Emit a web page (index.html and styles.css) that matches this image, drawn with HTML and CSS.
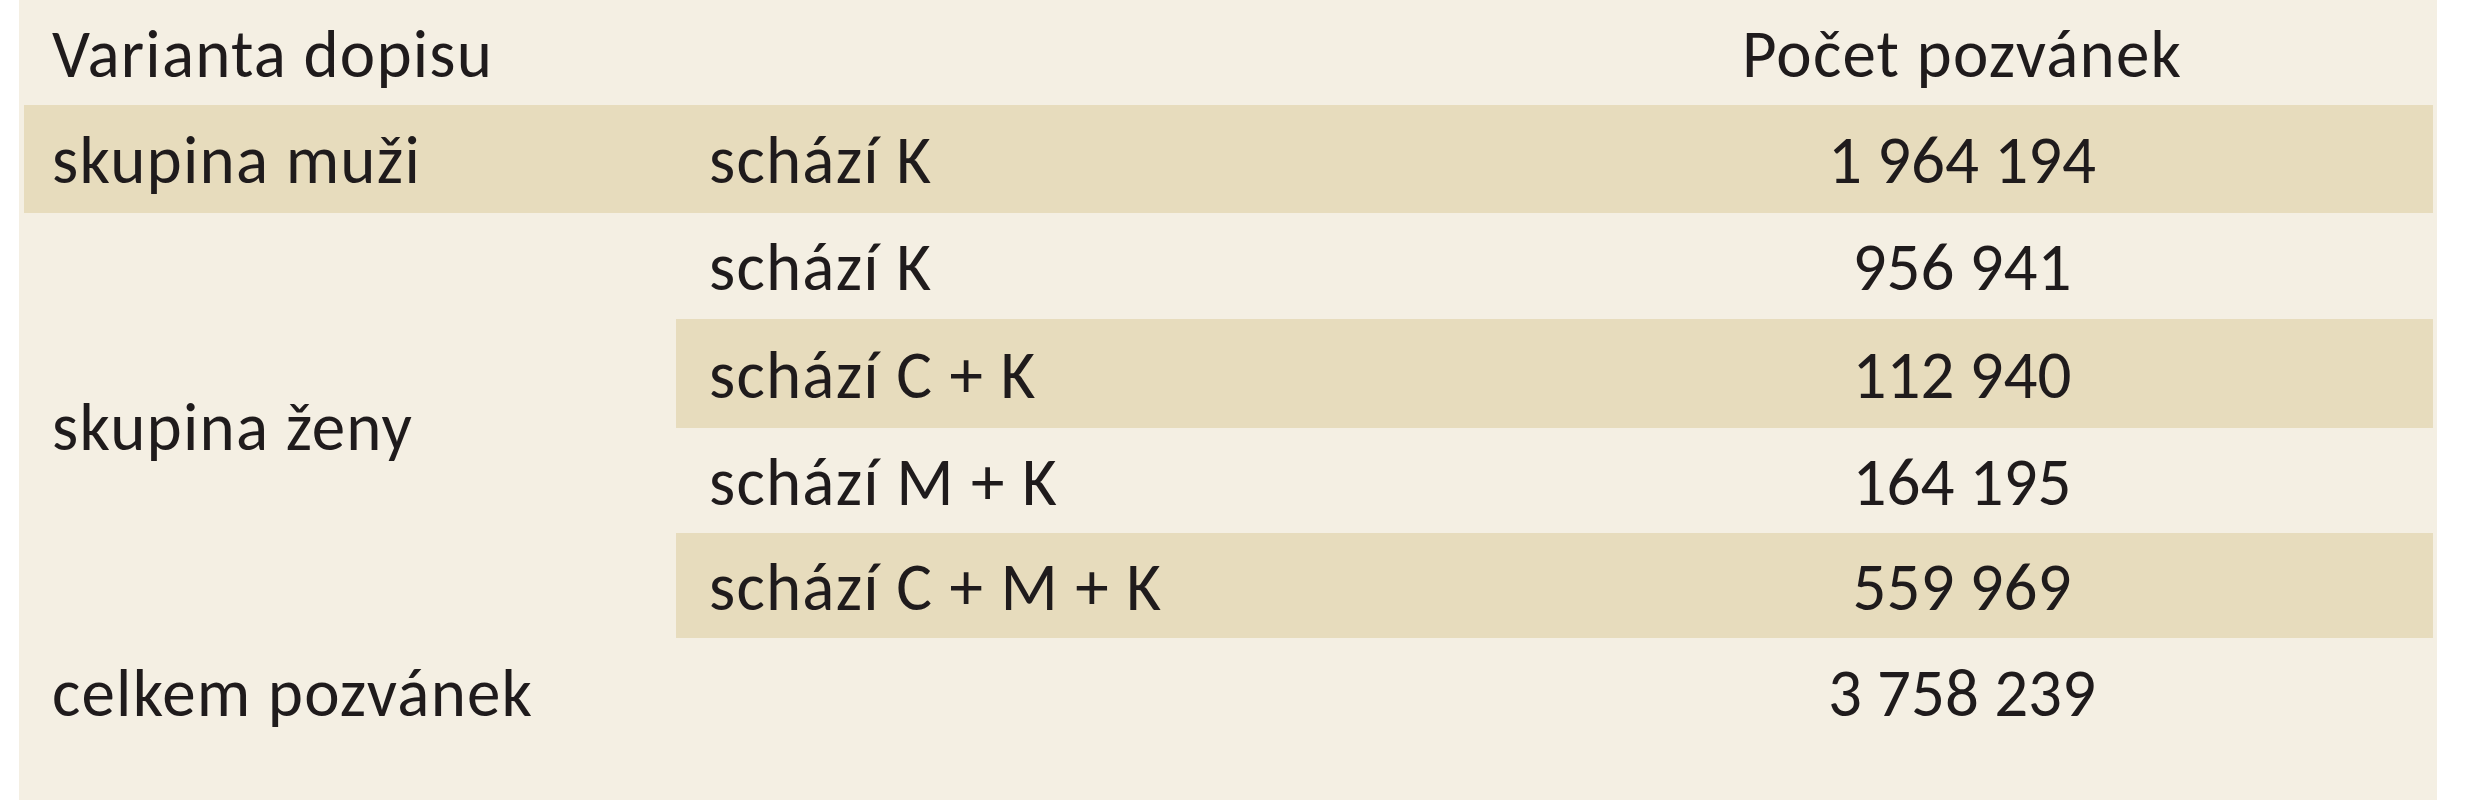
FILE: index.html
```html
<!DOCTYPE html>
<html lang="cs">
<head>
<meta charset="utf-8">
<title>Varianta dopisu</title>
<link rel="stylesheet" href="styles.css">
</head>
<body>
<div class="panel">
  <div class="table">
    <div class="cell c1 head r0">Varianta dopisu</div>
    <div class="cell c2 head r0"></div>
    <div class="cell c3 head r0">Počet pozvánek</div>

    <div class="cell c1 dark r1">skupina muži</div>
    <div class="cell c2 dark r1">schází K</div>
    <div class="cell c3 dark r1">1&#8239;964&#8239;194</div>

    <div class="cell c1 span">skupina ženy</div>
    <div class="cell c2 r2">schází K</div>
    <div class="cell c3 r2">956&#8239;941</div>
    <div class="cell c2 dark r3">schází C + K</div>
    <div class="cell c3 dark r3">112&#8239;940</div>
    <div class="cell c2 r4">schází M + K</div>
    <div class="cell c3 r4">164&#8239;195</div>
    <div class="cell c2 dark r5">schází C + M + K</div>
    <div class="cell c3 dark r5">559&#8239;969</div>

    <div class="cell c1 r6">celkem pozvánek</div>
    <div class="cell c2 r6"></div>
    <div class="cell c3 r6">3&#8239;758&#8239;239</div>
  </div>
</div>
</body>
</html>
```
FILE: styles.css
```css
html, body {
  margin: 0;
  padding: 0;
  background: #ffffff;
}

.panel {
  margin-left: 19px;
  width: 2418px;
  height: 800px;
  box-sizing: border-box;
  background: #f4efe3;
  padding: 0 4px 0 5px;
}

.table {
  display: grid;
  grid-template-columns: 652px 815px 942px;
  grid-template-rows: 105px 108px 106px 109px 105px 105px 107px;
  font-family: Carlito, Calibri, Lato, "Open Sans", sans-serif;
  font-size: 67px;
  letter-spacing: 1.2px;
  color: #1f1b1c;
}

.cell {
  display: flex;
  align-items: center;
  white-space: nowrap;
  padding-top: 2px;
  box-sizing: border-box;
}

.c1 { padding-left: 28px; }
.c2 { padding-left: 33px; }
.c3 { justify-content: center; }

.dark { background: #e7dcbd; }

.span {
  grid-column: 1;
  grid-row: 3 / 7;
}
.c2.r2, .c2.r3, .c2.r4, .c2.r5 { grid-column: 2; }
.c3.r2, .c3.r3, .c3.r4, .c3.r5 { grid-column: 3; }
.r2 { grid-row: 3; }
.r3 { grid-row: 4; }
.r4 { grid-row: 5; }
.r5 { grid-row: 6; }
```
